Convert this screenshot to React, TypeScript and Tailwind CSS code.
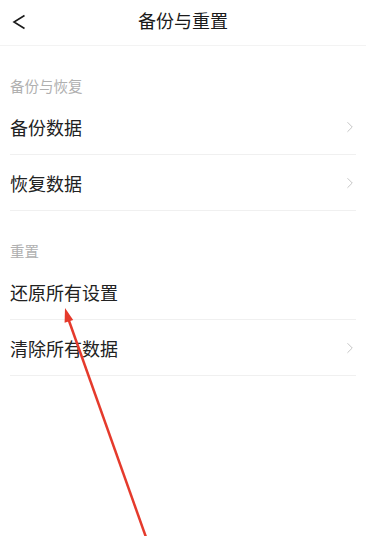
import { ChevronRight } from "lucide-react";

const sections = [
  {
    title: "备份与恢复",
    items: [
      { label: "备份数据", arrow: true },
      { label: "恢复数据", arrow: true },
    ],
  },
  {
    title: "重置",
    items: [
      { label: "还原所有设置", arrow: false },
      { label: "清除所有数据", arrow: true },
    ],
  },
];

export default function App() {
  return (
    <div
      className="relative w-[366px] h-[536px] bg-white overflow-hidden"
      style={{ fontFamily: '"Noto Sans CJK SC", "Noto Sans", sans-serif' }}
    >
      {/* header */}
      <div className="h-[46px] border-b border-[#f3f3f3] grid grid-cols-[1fr_auto_1fr] items-start">
        <div className="pl-[12px] pt-[14px]">
          <svg width="14" height="16" viewBox="0 0 14 16" fill="none">
            <polyline points="12.5,1.5 2,8 12.5,14.5" stroke="#1a1a1a" strokeWidth="1.6" strokeLinejoin="miter" />
          </svg>
        </div>
        <h1 className="pt-[8px] text-[18px] leading-[24px] text-[#1a1a1a]">备份与重置</h1>
        <div />
      </div>

      {sections.map((section) => (
        <div key={section.title}>
          <div className="h-[53px] px-[10px] pt-[32px] text-[14.5px] leading-[16px] text-[#b0b0b0]">
            {section.title}
          </div>
          <div className="px-[10px]">
            {section.items.map((item) => (
              <div
                key={item.label}
                className="h-[56px] flex items-center justify-between border-b border-[#f0f0f0]"
              >
                <span className="text-[18px] leading-[24px] text-[#222]">{item.label}</span>
                {item.arrow && (
                  <ChevronRight className="h-[18px] w-[18px] text-[#c4c4c4] -mr-[3px]" strokeWidth={1.3} />
                )}
              </div>
            ))}
          </div>
        </div>
      ))}

      {/* annotation arrow */}
      <svg
        className="absolute inset-0 pointer-events-none"
        width="366"
        height="536"
        viewBox="0 0 366 536"
      >
        <line x1="147" y1="540" x2="68" y2="318" stroke="#e53a2c" strokeWidth="2.5" />
        <polygon points="65,308 73.2,320 64.6,322.8" fill="#e53a2c" />
      </svg>
    </div>
  );
}
